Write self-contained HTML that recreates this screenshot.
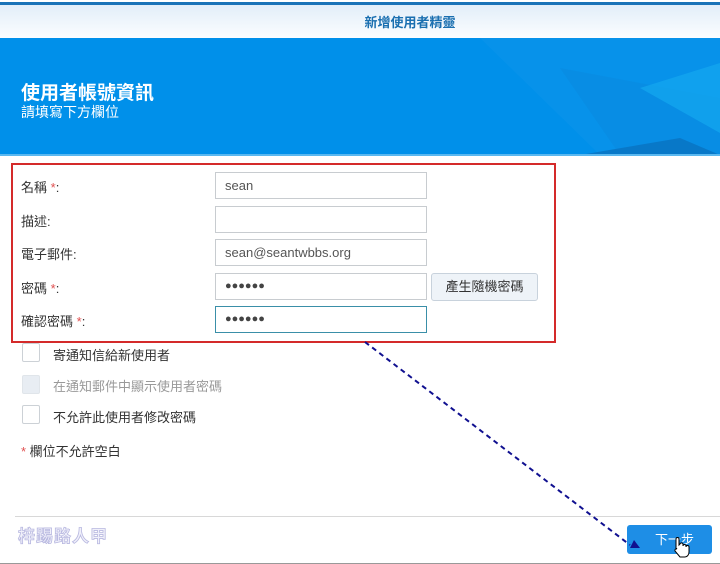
<!DOCTYPE html>
<html><head><meta charset="utf-8"><style>
*{margin:0;padding:0;box-sizing:border-box}
body{width:720px;height:564px;overflow:hidden;background:#fff;position:relative;font-family:"Liberation Sans","Noto Sans CJK TC",sans-serif;font-size:13px;color:#333}
.a{position:absolute}
.inp{position:absolute;left:215px;width:212px;height:27px;border:1px solid #c8ccd0;background:#fff;padding-left:9px;line-height:25px;color:#555;font-size:13px}
.pw{font-size:11px;letter-spacing:0px;color:#444;line-height:24px}
.lbl{position:absolute;left:21px;font-size:13px;color:#333}
.st{color:#e05050}
.cb{position:absolute;left:22px;width:18px;height:19px;border:1px solid #ccd1d6;background:#fff;border-radius:2px}
.cl{position:absolute;left:53px;font-size:13px}
</style></head><body>
<div class="a" style="left:0;top:2px;width:720px;height:3px;background:#1a73b8"></div>
<div class="a" style="left:0;top:5px;width:720px;height:33px;background:linear-gradient(#e2eef9,#fbfdff)"></div>
<div class="a" style="left:0;top:12px;width:720px;text-align:center;padding-left:100px;color:#1a6fb0;font-size:13px;font-weight:bold">新增使用者精靈</div>
<div class="a" style="left:0;top:38px;width:720px;height:117px;background:#0090ea;overflow:hidden">
<svg width="720" height="117" style="position:absolute;left:0;top:0">
<polygon points="480,0 720,0 720,117 600,117" fill="#0b95ea" opacity="0.6"/>
<polygon points="560,30 720,60 720,117 620,117" fill="#0a8ae0" opacity="0.6"/>
<polygon points="640,50 720,25 720,95" fill="#14a8ef" opacity="0.7"/>
<polygon points="580,117 680,100 720,117" fill="#0878c8"/>
</svg>
<div class="a" style="left:21px;top:40px;color:#fff;font-size:19px;font-weight:bold">使用者帳號資訊</div>
<div class="a" style="left:21px;top:64px;color:#fff;font-size:14px">請填寫下方欄位</div>
</div>
<div class="a" style="left:0;top:154px;width:720px;height:2px;background:#5ab8f0"></div>

<div class="a" style="left:11px;top:163px;width:545px;height:180px;border:2px solid #d42a2a"></div>
<div class="lbl" style="top:177px">名稱 <span class="st">*</span>:</div>
<div class="lbl" style="top:211px">描述:</div>
<div class="lbl" style="top:244px">電子郵件:</div>
<div class="lbl" style="top:278px">密碼 <span class="st">*</span>:</div>
<div class="lbl" style="top:311px">確認密碼 <span class="st">*</span>:</div>
<div class="inp" style="top:172px">sean</div>
<div class="inp" style="top:206px"></div>
<div class="inp" style="top:239px">sean@seantwbbs.org</div>
<div class="inp pw" style="top:273px">●●●●●●</div>
<div class="inp pw" style="top:306px;border-color:#3a8fa8">●●●●●●</div>
<div class="a" style="left:431px;top:273px;width:107px;height:28px;border:1px solid #c8d2dc;border-radius:3px;background:#eef3f8;text-align:center;line-height:26px;font-size:13px">產生隨機密碼</div>

<div class="cb" style="top:343px"></div><div class="cl" style="top:345px">寄通知信給新使用者</div>
<div class="cb" style="top:375px;background:#e8edf3;border-color:#e0e5ea"></div><div class="cl" style="top:376px;color:#999">在通知郵件中顯示使用者密碼</div>
<div class="cb" style="top:405px"></div><div class="cl" style="top:407px">不允許此使用者修改密碼</div>
<div class="a" style="left:21px;top:441px;font-size:13px"><span class="st">*</span> 欄位不允許空白</div>

<div class="a" style="left:15px;top:516px;width:705px;height:1px;background:#d8d8d8"></div>
<div class="a" style="left:0;top:563px;width:720px;height:1px;background:#999"></div>
<div class="a" style="left:18px;top:522px;font-size:17px;font-weight:bold;color:#f0f0fa;-webkit-text-stroke:0.8px #b8b8e0;letter-spacing:1px">梓踢路人甲</div>
<div class="a" style="left:627px;top:525px;width:85px;height:29px;background:#1e8ee6;border-radius:3px;color:#fff;text-align:center;line-height:29px;font-size:13px;padding-left:10px">下一步</div>
<svg class="a" style="left:0;top:0" width="720" height="564">
<line x1="365" y1="342" x2="630" y2="545" stroke="#101090" stroke-width="2" stroke-dasharray="5,4"/>
<polygon points="630,548 640,548 634,540" fill="#101090"/>
<path d="M676 548 v-9 a1.5 1.5 0 0 1 3 0 v6 l1 -1 a1.5 1.5 0 0 1 3 1 v1 a1.5 1.5 0 0 1 3 0 v1 a1.5 1.5 0 0 1 3 0 v5 c0 3 -2 5 -4 5 h-5 l-5 -6 a1.5 1.5 0 0 1 2 -2z" fill="#fff" stroke="#000" stroke-width="1"/>
</svg>
</body></html>
